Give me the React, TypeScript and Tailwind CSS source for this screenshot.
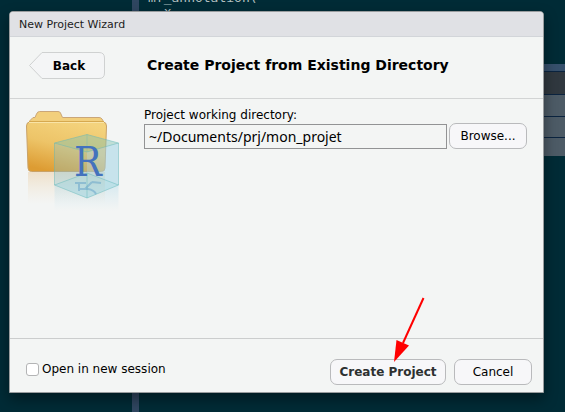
import { useState } from "react";

function Backdrop() {
  return (
    <div aria-hidden="true" className="absolute inset-0 flex overflow-hidden bg-[#002b36]">
      <div className="w-[132px] shrink-0" />
      <div className="w-[7px] shrink-0 bg-[#2f4660]" />
      <div className="flex min-w-0 flex-1 justify-between">
        <pre className="-mt-[9px] pl-[9px] font-['DejaVu_Sans_Mono',monospace] text-[13px] leading-[14px] text-[#b4c0c0]">
          {"mf_annotation(\n  x"}
        </pre>
        <div className="mt-16 w-10 shrink-0">
          <div className="h-2 border-b border-[#0b2440] bg-[#36506c]" />
          <div className="h-[23px] border-b border-[#0b2440] bg-[#30383f]" />
          <div className="h-[22px] border-b border-[#0b2440] bg-[#4d5b66]" />
          <div className="h-[21px] border-b border-[#0b2440] bg-[#4d5b66]" />
          <div className="h-[18px] bg-[#4d5b66]" />
        </div>
      </div>
    </div>
  );
}

function FolderIcon() {
  return (
    <svg width="94" height="102" viewBox="0 0 94 102" aria-hidden="true">
      <defs>
        <linearGradient id="front" x1="0.7" y1="0" x2="0.3" y2="1">
          <stop offset="0" stopColor="#f4d37d" />
          <stop offset="0.5" stopColor="#edc468" />
          <stop offset="1" stopColor="#dd9c33" />
        </linearGradient>
        <linearGradient id="shine" x1="0" y1="0" x2="0" y2="1">
          <stop offset="0" stopColor="#e3b06a" stopOpacity="0.3" />
          <stop offset="1" stopColor="#f0d0a0" stopOpacity="0" />
        </linearGradient>
        <linearGradient id="glass" x1="0" y1="0" x2="0" y2="1">
          <stop offset="0" stopColor="#a4d4e8" stopOpacity="0.35" />
          <stop offset="1" stopColor="#b5dcec" stopOpacity="0" />
        </linearGradient>
      </defs>
      <rect x="2" y="61" width="77" height="32" fill="url(#shine)" />
      <path d="M2.5 13 L4 9.500 L7 6.500 H9 L10.500 3 Q11.500 0.500 13.500 0.500 H32 Q34 0.500 34.500 2 L36.500 6.500 H73 Q75 6.500 76 8 L79 13 Z" fill="#f2cf7c" stroke="#caa678" />
      <path d="M0.5 15 Q0.5 11 4 11 H77 Q80.500 11 80.500 15 L79 57 Q79 60.500 75.500 60.500 H5.500 Q2 60.500 2 57 Z" fill="url(#front)" stroke="#c9a268" />
      <path d="M3 10.500 H78" stroke="#d6a94f" />
      <path d="M3 11.500 H78" stroke="#f9e4a6" />
      <path d="M28.500 74 L61 87 L92.500 74 V100 H28.500 Z" fill="url(#glass)" />
      <path d="M28.500 32 L61 23.500 L92.500 32 V74 L61 87 L28.500 74 Z" fill="#7cc0d4" fillOpacity="0.32" />
      <path d="M61 41 L92.500 32 V74 L61 62 Z" fill="#b9e2f6" fillOpacity="0.3" />
      <path d="M28.500 32 L61 23.500 L92.500 32 L61 41 Z" fill="#8bc98c" fillOpacity="0.2" />
      <path d="M28.500 74 L61 62 L92.500 74 L61 87 Z" fill="#8ad2e4" fillOpacity="0.25" />
      <path d="M28.500 32 L61 23.500 L92.500 32 V74 L61 87 L28.500 74 Z M28.500 32 L61 41 L92.500 32 M28.500 74 L61 62 L92.500 74 M61 62 V87" fill="none" stroke="#5fb5b8" strokeOpacity="0.45" />
      <path d="M61 23.500 V41" stroke="#5fb5b8" strokeOpacity="0.3" />
      <path d="M49 72 H60 M53 72 V80 M66 71 L59 78 M66 71 L75 72 M53 78 H62 Q68 79 70 83" fill="none" stroke="#4a90c4" strokeOpacity="0.4" strokeWidth="2" />
      <text x="48" y="65" fontSize="41" fontFamily="'DejaVu Serif Condensed', 'DejaVu Serif', serif" fill="#4472bd">R</text>
    </svg>
  );
}

const button =
  "h-[26px] rounded-[7px] border border-[#b9babc] bg-[#f7f7f9] text-center text-[12px] leading-4";

export default function App() {
  const [directory, setDirectory] = useState("~/Documents/prj/mon_projet");
  return (
    <div className="relative flex min-h-screen flex-col pt-[11px] pr-[21px] pb-[19px] pl-[9px] font-['DejaVu_Sans',sans-serif] text-[12px] text-black">
      <Backdrop />
      <main className="relative flex flex-1 flex-col overflow-hidden rounded-t-[4px] border border-[#999c9e] bg-[#f3f5f4] shadow-[0_6px_14px_rgba(0,0,0,0.4)]">
        <div className="h-[25px] shrink-0 border-b border-[#d2d5d9] bg-[#e0e1e5] pl-[9px] text-[11px] leading-[25px] text-[#1c1c1c]">
          New Project Wizard
        </div>
        <header className="flex h-[62px] shrink-0 items-center border-b border-[#d2d4d4] pb-1 pl-[19px]">
          <button type="button" className="relative h-[27px] w-[76px] pl-1 text-[12px] font-bold">
            <svg className="absolute inset-0" width="76" height="27" viewBox="0 0 76 27" aria-hidden="true">
              <path d="M0.5 13.5 L13 0.5 H70 Q75.5 0.5 75.5 6 V21 Q75.5 26.5 70 26.5 H13 Z" fill="#f4f5f6" stroke="#cfd1d1" />
            </svg>
            <span className="relative">Back</span>
          </button>
          <h1 className="ml-[42px] text-[14px] font-bold">Create Project from Existing Directory</h1>
        </header>
        <section className="flex flex-1 items-start pt-2 pr-4 pl-4">
          <div className="w-[118px] shrink-0 pt-1">
            <FolderIcon />
          </div>
          <div className="min-w-0 flex-1">
            <label htmlFor="directory" className="block leading-4">
              Project working directory:
            </label>
            <div className="flex items-center gap-[2px]">
              <input
                id="directory"
                value={directory}
                onChange={(event) => setDirectory(event.target.value)}
                className="h-[25px] min-w-0 flex-1 border border-[#929394] bg-[#f3f5f4] px-1 font-['Noto_Sans',sans-serif] text-[14px]"
              />
              <button type="button" className={`${button} w-[78px]`}>
                Browse...
              </button>
            </div>
          </div>
        </section>
        <footer className="flex h-[54px] shrink-0 items-center justify-between border-t border-[#cbcdcd] pt-[13px] pr-[11px] pl-4">
          <label className="-mt-[6px] flex items-center gap-[3px]">
            <input type="checkbox" className="size-[13px] appearance-none rounded-[3px] border border-[#b3b4b5] bg-white checked:bg-[#4472bd]" />
            Open in new session
          </label>
          <div className="flex gap-2">
            <button type="button" className={`${button} w-[116px] font-bold text-[#2d3030]`}>
              Create Project
            </button>
            <button type="button" className={`${button} w-[78px]`}>
              Cancel
            </button>
          </div>
        </footer>
        <svg className="pointer-events-none absolute right-[118px] bottom-[29px]" width="32" height="66" viewBox="0 0 32 66" aria-hidden="true">
          <path d="M30.500 1 L10 46" stroke="#ff0000" strokeWidth="2" />
          <path d="M1 65 L3.500 43 L16 48.500 Z" fill="#ff0000" />
        </svg>
      </main>
    </div>
  );
}
